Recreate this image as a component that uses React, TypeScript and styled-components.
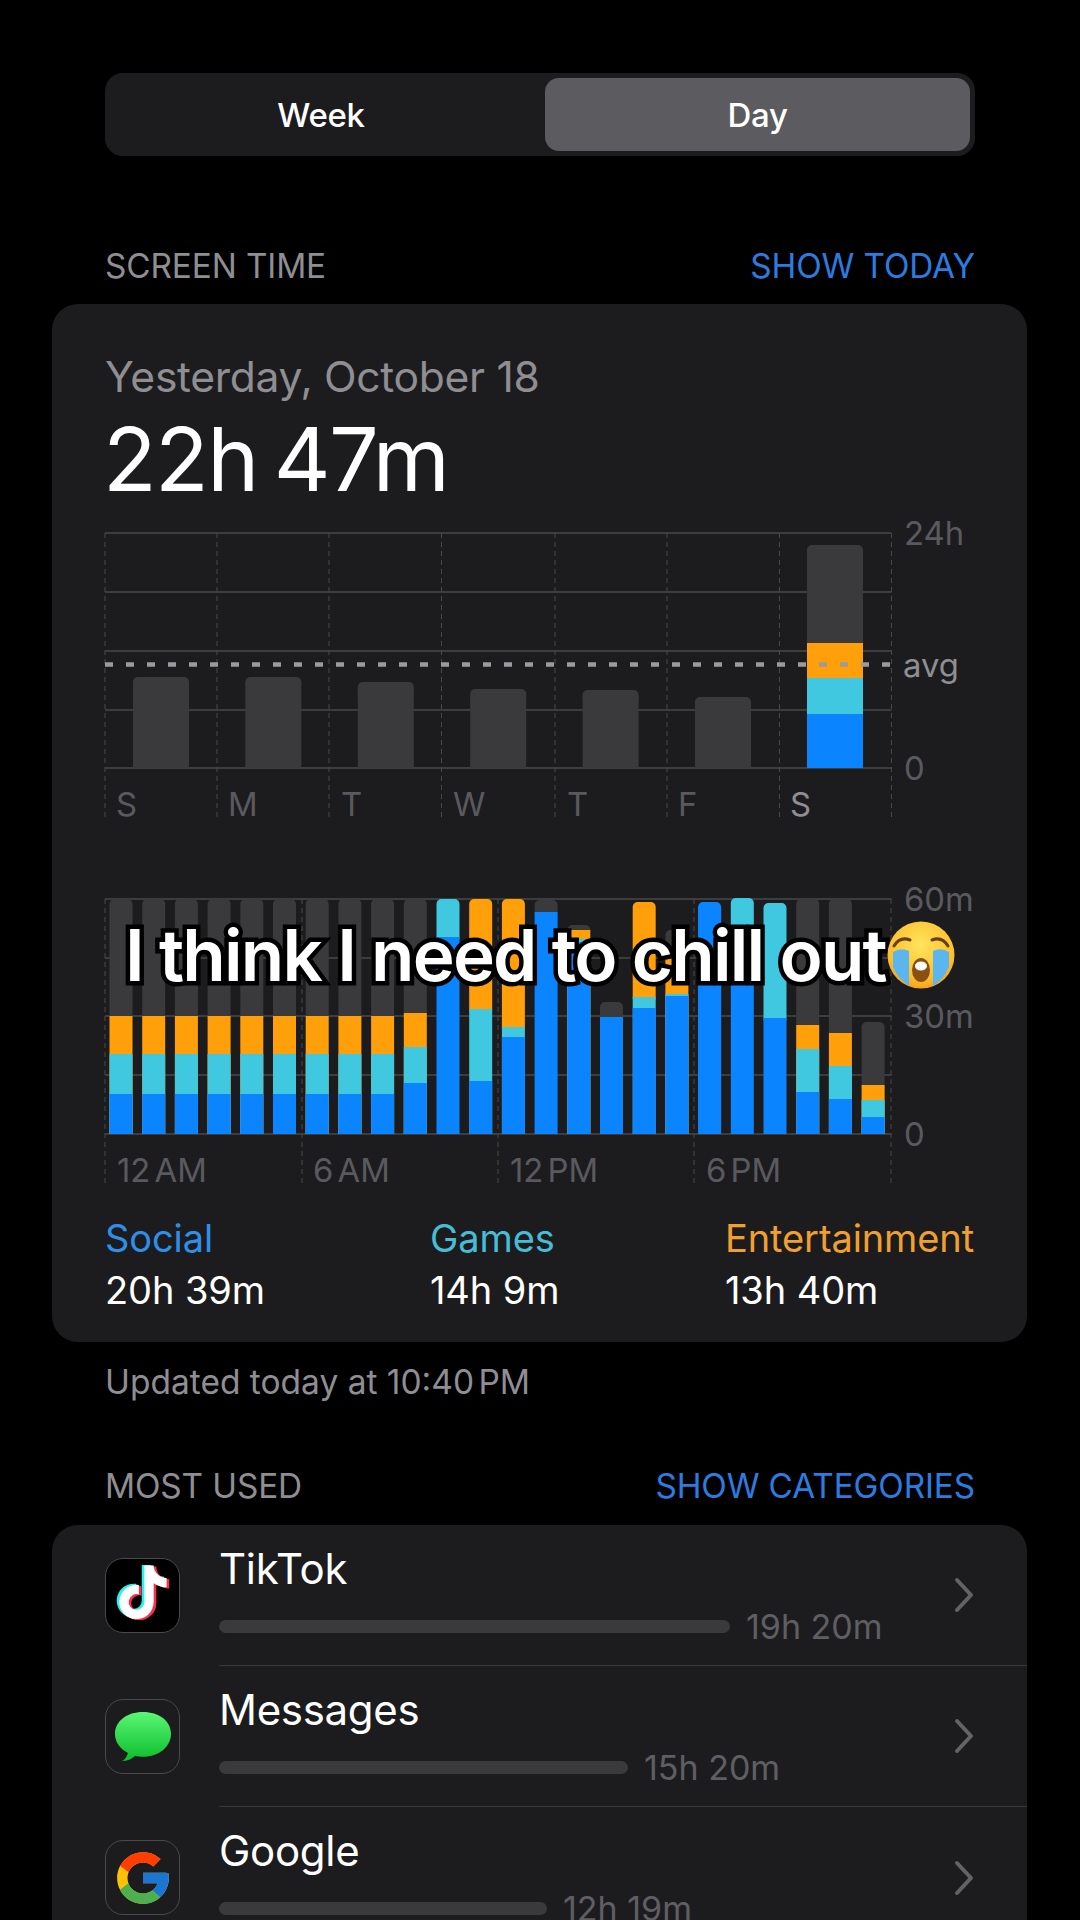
import React from "react";
import styled, { createGlobalStyle } from "styled-components";
import { FaTiktok } from "react-icons/fa";
import { FcGoogle } from "react-icons/fc";

const Global = createGlobalStyle`
  html, body { margin: 0; padding: 0; background: #000; }
  #root { height: 1920px; overflow: hidden; }
`;

const BLUE = "#0a84ff";
const CYAN = "#40c8e0";
const ORANGE = "#ff9f0a";
const GRAY = "#3a3a3c";
const GRID = "#48484a";

const Page = styled.div`
  height: 1920px;
  overflow: hidden;
  background: #000;
  padding: 73px 53px 0 52px;
  box-sizing: border-box;
  font-family: Inter, "Liberation Sans", sans-serif;
  color: #fff;
`;

const Segment = styled.div`
  display: grid;
  grid-template-columns: 422px 1fr;
  gap: 13px;
  margin: 0 0 0 53px;
  width: 870px;
  height: 83px;
  padding: 5px;
  box-sizing: border-box;
  background: #1c1c1e;
  border-radius: 18px;
`;

const SegmentItem = styled.div<{ $active?: boolean }>`
  display: flex;
  align-items: center;
  justify-content: center;
  font-size: 33px;
  font-weight: 450;
  letter-spacing: -0.3px;
  border-radius: 14px;
  background: ${(p) => (p.$active ? "#5c5c60" : "transparent")};
`;

const SectionHead = styled.div<{ $top: number }>`
  display: flex;
  justify-content: space-between;
  margin: ${(p) => p.$top}px 0 0 53px;
  width: 870px;
  font-size: 33.3px;
  line-height: 40px;
  letter-spacing: -0.1px;
  color: #8e8e93;
`;

const SectionLink = styled.span`
  color: #2c7ce0;
`;

const Card = styled.section`
  position: relative;
  margin-top: 18px;
  width: 975px;
  height: 1038px;
  padding: 48px 53px 0;
  box-sizing: border-box;
  background: #1c1c1e;
  border-radius: 26px;
`;

const DateLine = styled.div`
  font-size: 42.6px;
  line-height: 50px;
  letter-spacing: -0.3px;
  color: #8e8e93;
`;

const Total = styled.div`
  margin: 7px 0 0 -2px;
  font-size: 88px;
  line-height: 100px;
  letter-spacing: -1.6px;
  word-spacing: -7px;
`;

const Chart = styled.svg<{ $top: number }>`
  display: block;
  margin-top: ${(p) => p.$top}px;
  width: 922px;
  height: 305px;
  overflow: visible;
`;

const ChartLabel = styled.text<{ $bright?: boolean; $tight?: boolean }>`
  font-family: Inter, "Liberation Sans", sans-serif;
  font-size: 32.8px;
  fill: ${(p) => (p.$bright ? "#8e8e93" : "#5a5a5e")};
  dominant-baseline: central;
  word-spacing: ${(p) => (p.$tight ? "-5px" : "0")};
`;

const Legend = styled.div`
  display: grid;
  grid-template-columns: 325px 295px auto;
  margin-top: 25px;
`;

const LegendName = styled.div<{ $color: string }>`
  font-size: 38px;
  line-height: 46px;
  letter-spacing: -0.1px;
  color: ${(p) => p.$color};
`;

const LegendValue = styled.div`
  margin-top: 4px;
  font-size: 38px;
  line-height: 50px;
  letter-spacing: -0.1px;
`;

const Overlay = styled.div`
  position: absolute;
  left: 73px;
  top: 611px;
  display: flex;
  align-items: center;
  height: 80px;
  white-space: nowrap;
`;

const OverlayText = styled.span`
  font-family: Inter, "Liberation Sans", sans-serif;
  font-size: 71px;
  font-weight: 600;
  line-height: 80px;
  letter-spacing: -1.8px;
  color: #fff;
  -webkit-text-stroke: 9px #000;
  paint-order: stroke fill;
`;

const EmojiSvg = styled.svg`
  flex: none;
  width: 68px;
  height: 68px;
  margin-left: 1px;
`;

const Updated = styled.div`
  margin: 20px 0 0 53px;
  font-size: 33.5px;
  line-height: 40px;
  color: #8e8e93;
`;

const TightTime = styled.span`
  word-spacing: -5px;
`;

const ListCard = styled.section`
  margin-top: 19px;
  width: 975px;
  background: #1c1c1e;
  border-radius: 26px;
`;

const Row = styled.div`
  display: flex;
  height: 141px;
`;

const IconBox = styled.div<{ $bg: string }>`
  flex: none;
  display: flex;
  align-items: center;
  justify-content: center;
  width: 75px;
  height: 75px;
  margin: 33px 39px 0 53px;
  box-sizing: border-box;
  border: 1.5px solid #4a4a4c;
  border-radius: 18px;
  background: ${(p) => p.$bg};
`;

const RowBody = styled.div<{ $last?: boolean }>`
  flex: 1;
  display: flex;
  align-items: center;
  padding-right: 53px;
  border-bottom: ${(p) => (p.$last ? "none" : "1.5px solid #38383a")};
`;

const RowMain = styled.div`
  flex: 1;
  align-self: flex-start;
  padding-top: 20px;
`;

const AppName = styled.div`
  font-size: 42px;
  line-height: 48px;
  letter-spacing: -0.3px;
`;

const UsageRow = styled.div`
  display: flex;
  align-items: center;
  gap: 16px;
  margin-top: 11px;
  height: 44px;
`;

const UsageBar = styled.div<{ $w: number }>`
  width: ${(p) => p.$w}px;
  height: 13px;
  border-radius: 7px;
  background: ${GRAY};
`;

const UsageValue = styled.span`
  font-size: 34px;
  color: #5f5f63;
  white-space: nowrap;
`;

type Seg = [string, number];

function Stack({ x, w, bottom, segs }: { x: number; w: number; bottom: number; segs: Seg[] }) {
  return (
    <g>
      {segs.map(([color, top], i) => (
        <rect
          key={i}
          x={x}
          y={top}
          width={w}
          height={i === 0 && segs.length > 1 ? segs[1][1] - top + 6 : bottom - top}
          rx={i === 0 ? 5 : 0}
          fill={color}
        />
      ))}
      {segs.length === 1 && <rect x={x} y={segs[0][1] + 6} width={w} height={bottom - segs[0][1] - 6} fill={segs[0][0]} />}
    </g>
  );
}

const weekX = [105, 217, 329, 441.5, 555, 667, 779.5, 891.5];
const weekTops = [677, 677, 682, 689, 690, 697];
const dayLabels: [string, number][] = [["S", 116], ["M", 228], ["T", 341], ["W", 453], ["T", 567], ["F", 678]];

function WeekChart() {
  return (
    <Chart $top={11} viewBox="105 520 922 305">
      {[533, 592, 651, 710, 768].map((y) => (
        <line key={y} x1={105} x2={891.5} y1={y} y2={y} stroke={GRID} strokeWidth={1.5} />
      ))}
      {weekX.map((x) => (
        <line key={x} x1={x} x2={x} y1={533} y2={820} stroke={GRID} strokeWidth={1} strokeDasharray="5 4" />
      ))}
      {weekTops.map((t, i) => (
        <Stack key={i} x={133 + i * 112.4} w={56} bottom={768} segs={[[GRAY, t], [GRAY, t + 6]]} />
      ))}
      <Stack x={807} w={56} bottom={768} segs={[[GRAY, 545], [ORANGE, 643], [CYAN, 678], [BLUE, 714]]} />
      <line x1={105} x2={891.5} y1={664.5} y2={664.5} stroke="#9a9a9f" strokeWidth={4.5} strokeDasharray="8 13" />
      <ChartLabel x={904} y={533}>24h</ChartLabel>
      <ChartLabel x={903} y={665} $bright>avg</ChartLabel>
      <ChartLabel x={904} y={768}>0</ChartLabel>
      {dayLabels.map(([d, x], i) => (
        <ChartLabel key={i} x={x} y={804}>{d}</ChartLabel>
      ))}
      <ChartLabel x={790} y={804} $bright>S</ChartLabel>
    </Chart>
  );
}

const first: Seg[] = [[GRAY, 899], [ORANGE, 1016], [CYAN, 1054], [BLUE, 1094]];
const hours: Seg[][] = [
  first, first, first, first, first, first, first, first, first,
  [[GRAY, 899], [ORANGE, 1013], [CYAN, 1047], [BLUE, 1083]],
  [[CYAN, 899], [BLUE, 937]],
  [[ORANGE, 899], [CYAN, 1009], [BLUE, 1081]],
  [[ORANGE, 899], [CYAN, 1027], [BLUE, 1037]],
  [[GRAY, 900], [BLUE, 912]],
  [[GRAY, 925], [ORANGE, 930], [CYAN, 939], [BLUE, 942]],
  [[GRAY, 1002], [BLUE, 1017]],
  [[ORANGE, 902], [CYAN, 997], [BLUE, 1008]],
  [[GRAY, 930], [ORANGE, 958], [CYAN, 994], [BLUE, 996]],
  [[BLUE, 902]],
  [[CYAN, 898], [BLUE, 927]],
  [[CYAN, 903], [BLUE, 1018]],
  [[GRAY, 899], [ORANGE, 1025], [CYAN, 1049], [BLUE, 1092]],
  [[GRAY, 899], [ORANGE, 1033], [CYAN, 1066], [BLUE, 1099]],
  [[GRAY, 1022], [ORANGE, 1085], [CYAN, 1100], [BLUE, 1117]],
];

const hourLabels: [string, number][] = [["12 AM", 117], ["6 AM", 313], ["12 PM", 510], ["6 PM", 706]];

function HourChart() {
  return (
    <Chart $top={60} viewBox="105 885 922 305">
      {[899, 958, 1016, 1075, 1134].map((y) => (
        <line key={y} x1={105} x2={891.5} y1={y} y2={y} stroke={GRID} strokeWidth={1.5} />
      ))}
      {[105, 302, 498, 694, 891].map((x) => (
        <line key={x} x1={x} x2={x} y1={899} y2={1185} stroke={GRID} strokeWidth={1} strokeDasharray="5 4" />
      ))}
      {hours.map((segs, i) => (
        <Stack key={i} x={109.5 + i * 32.7} w={23} bottom={1134} segs={segs} />
      ))}
      <ChartLabel x={904} y={899}>60m</ChartLabel>
      <ChartLabel x={904} y={1016}>30m</ChartLabel>
      <ChartLabel x={904} y={1134}>0</ChartLabel>
      {hourLabels.map(([t, x]) => (
        <ChartLabel key={t} x={x} y={1170} $tight>{t}</ChartLabel>
      ))}
    </Chart>
  );
}

function CryingEmoji() {
  return (
    <EmojiSvg viewBox="0 0 68 68">
      <defs>
        <radialGradient id="face" cx="50%" cy="35%" r="70%">
          <stop offset="0%" stopColor="#ffe45e" />
          <stop offset="70%" stopColor="#fdc02f" />
          <stop offset="100%" stopColor="#f59a16" />
        </radialGradient>
      </defs>
      <circle cx="34" cy="34" r="33.5" fill="url(#face)" />
      <path d="M7 25 Q13 15 23 19" fill="none" stroke="#6b3f16" strokeWidth="3" strokeLinecap="round" />
      <path d="M61 25 Q55 15 45 19" fill="none" stroke="#6b3f16" strokeWidth="3" strokeLinecap="round" />
      <path d="M6 31 Q14 26 22 30 L22 65 Q11 58 6 46 Z" fill="#5bb5ee" />
      <path d="M62 31 Q54 26 46 30 L46 65 Q57 58 62 46 Z" fill="#5bb5ee" />
      <ellipse cx="34" cy="49" rx="9" ry="12" fill="#8a5012" />
      <ellipse cx="34" cy="45" rx="6" ry="4.5" fill="#fff" />
    </EmojiSvg>
  );
}

function TikTokLogo() {
  return (
    <svg width="54" height="62" viewBox="0 0 448 512">
      <g transform="translate(-22 -10)"><FaTiktok color="#25f4ee" size={448} /></g>
      <g transform="translate(22 10)"><FaTiktok color="#fe2c55" size={448} /></g>
      <FaTiktok color="#ffffff" size={448} />
    </svg>
  );
}

function MessagesLogo() {
  return (
    <svg width="58" height="52" viewBox="0 0 58 52">
      <defs>
        <linearGradient id="msg" x1="0" y1="0" x2="0" y2="1">
          <stop offset="0%" stopColor="#5bf675" />
          <stop offset="100%" stopColor="#0cbd2a" />
        </linearGradient>
      </defs>
      <path d="M29 1C13 1 1 10 1 23c0 8 5 15 13 19-1 4-4 7-6 8 5 0 10-2 13-5 3 .6 5 .8 8 .8 16 0 28-10 28-23S45 1 29 1Z" fill="url(#msg)" />
    </svg>
  );
}

const apps = [
  { name: "TikTok", value: "19h 20m", w: 511, bg: "#000", icon: <TikTokLogo /> },
  { name: "Messages", value: "15h 20m", w: 409, bg: "#1c1c1e", icon: <MessagesLogo /> },
  { name: "Google", value: "12h 19m", w: 328, bg: "#1c1c1e", icon: <FcGoogle size={62} /> },
];

export default function App() {
  return (
    <Page>
      <Global />
      <Segment>
        <SegmentItem>Week</SegmentItem>
        <SegmentItem $active>Day</SegmentItem>
      </Segment>
      <SectionHead $top={90}>
        <span>SCREEN TIME</span>
        <SectionLink>SHOW TODAY</SectionLink>
      </SectionHead>
      <Card>
        <DateLine>Yesterday, October 18</DateLine>
        <Total>22h 47m</Total>
        <WeekChart />
        <HourChart />
        <Legend>
          <div>
            <LegendName $color="#2f8fe8">Social</LegendName>
            <LegendValue>20h 39m</LegendValue>
          </div>
          <div>
            <LegendName $color="#46bcd6">Games</LegendName>
            <LegendValue>14h 9m</LegendValue>
          </div>
          <div>
            <LegendName $color="#f0a030">Entertainment</LegendName>
            <LegendValue>13h 40m</LegendValue>
          </div>
        </Legend>
        <Overlay>
          <OverlayText>I think I need to chill out</OverlayText>
          <CryingEmoji />
        </Overlay>
      </Card>
      <Updated>Updated today at <TightTime>10:40 PM</TightTime></Updated>
      <SectionHead $top={64}>
        <span>MOST USED</span>
        <SectionLink>SHOW CATEGORIES</SectionLink>
      </SectionHead>
      <ListCard>
        {apps.map((a, i) => (
          <Row key={a.name}>
            <IconBox $bg={a.bg}>{a.icon}</IconBox>
            <RowBody $last={i === apps.length - 1}>
              <RowMain>
                <AppName>{a.name}</AppName>
                <UsageRow>
                  <UsageBar $w={a.w} />
                  <UsageValue>{a.value}</UsageValue>
                </UsageRow>
              </RowMain>
              <svg width="20" height="36" viewBox="0 0 20 36" fill="none">
                <path d="M3 3 L17 18 L3 33" stroke="#636366" strokeWidth="4" strokeLinecap="round" strokeLinejoin="round" />
              </svg>
            </RowBody>
          </Row>
        ))}
      </ListCard>
    </Page>
  );
}
